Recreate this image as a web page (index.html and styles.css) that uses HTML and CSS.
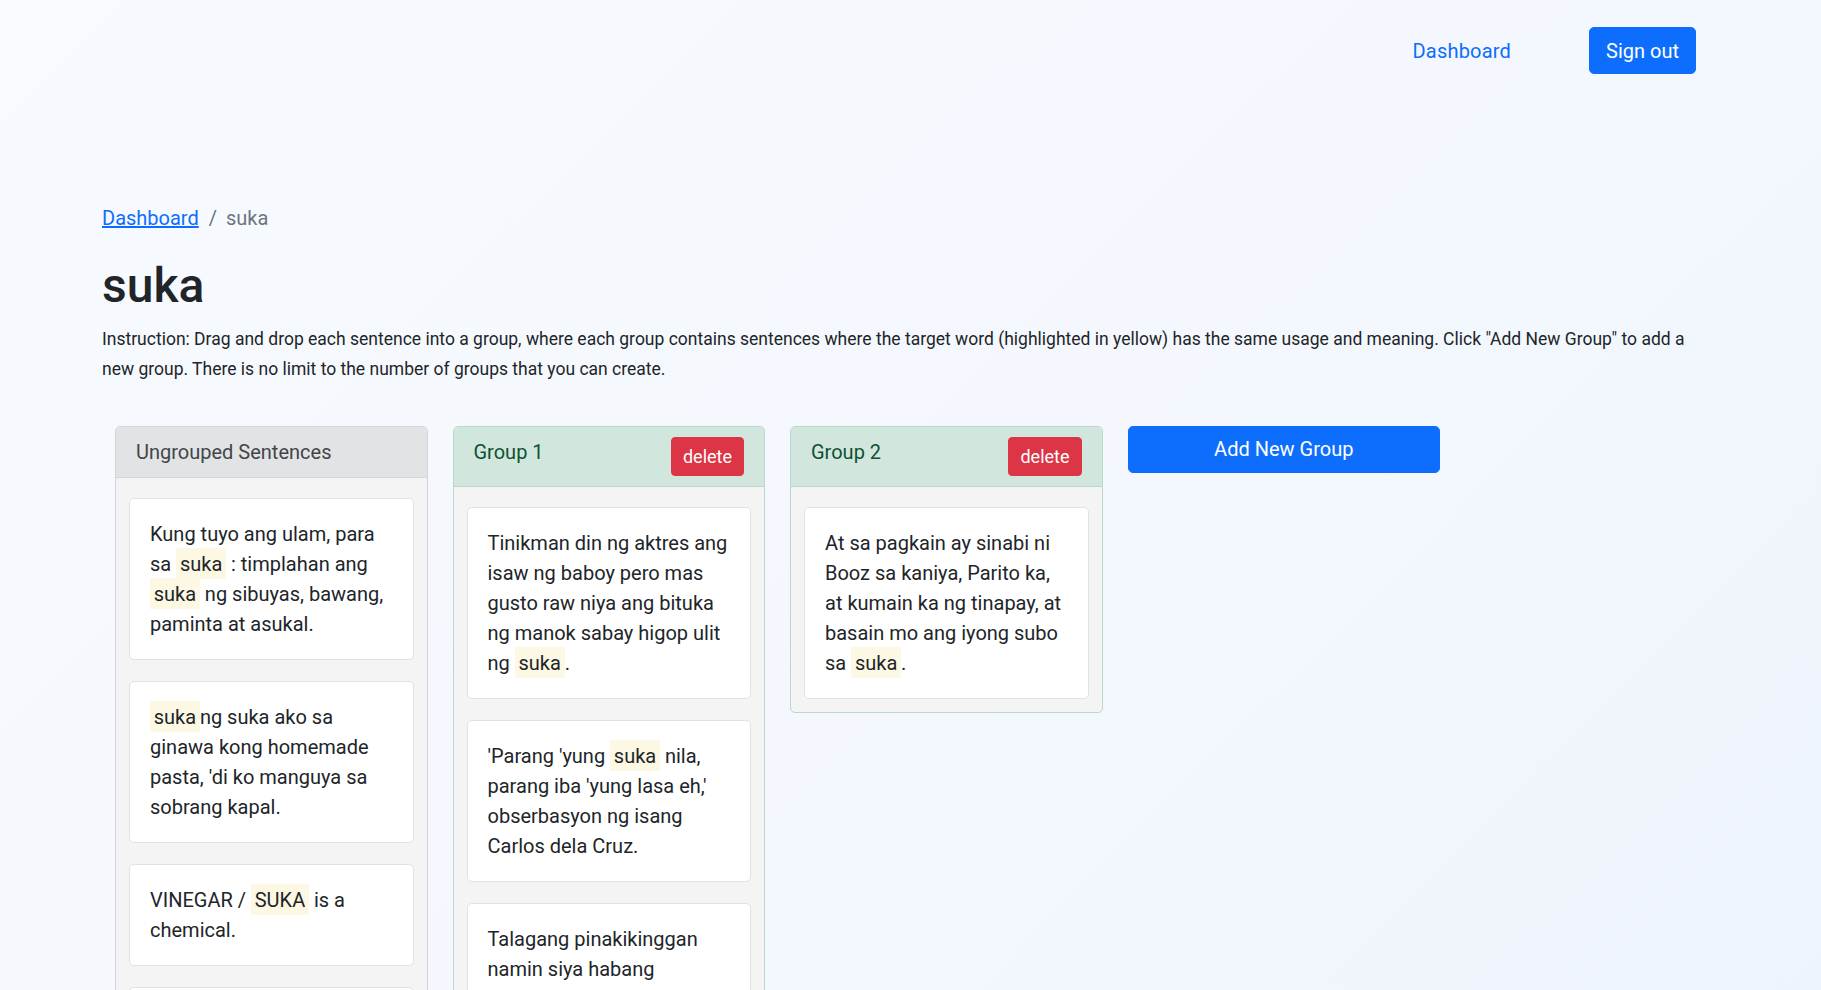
FILE: index.html
```html
<!DOCTYPE html>
<html lang="en">
<head>
<meta charset="utf-8">
<title>suka</title>
<link rel="stylesheet" href="styles.css">
</head>
<body>
<nav class="topnav">
  <a class="nav-link" href="#">Dashboard</a>
  <button class="btn btn-primary btn-lg">Sign out</button>
</nav>
<main class="page">
  <div class="breadcrumb">
    <a class="crumb-link" href="#">Dashboard</a>
    <span class="crumb-sep">/</span>
    <span class="crumb-active">suka</span>
  </div>
  <h1 class="title">suka</h1>
  <p class="instruction">Instruction: Drag and drop each sentence into a group, where each group contains sentences where the target word (highlighted in yellow) has the same usage and meaning. Click "Add New Group" to add a new group. There is no limit to the number of groups that you can create.</p>

  <div class="board">
    <section class="column column-ungrouped">
      <header class="col-head">Ungrouped Sentences</header>
      <div class="col-body">
        <div class="sentence">Kung tuyo ang ulam, para sa <mark>suka</mark> : timplahan ang <mark>suka</mark> ng sibuyas, bawang, paminta at asukal.</div>
        <div class="sentence"><mark>suka</mark>ng suka ako sa ginawa kong homemade pasta, 'di ko manguya sa sobrang kapal.</div>
        <div class="sentence">VINEGAR / <mark>SUKA</mark> is a chemical.</div>
        <div class="sentence">Masarap isawsaw ang lechon sa <mark>suka</mark> na may bawang.</div>
      </div>
    </section>

    <section class="column column-group">
      <header class="col-head">Group 1 <button class="btn btn-danger">delete</button></header>
      <div class="col-body">
        <div class="sentence">Tinikman din ng aktres ang isaw ng baboy pero mas gusto raw niya ang bituka ng manok sabay higop ulit ng <mark>suka</mark>.</div>
        <div class="sentence">'Parang 'yung <mark>suka</mark> nila, parang iba 'yung lasa eh,' obserbasyon ng isang Carlos dela Cruz.</div>
        <div class="sentence">Talagang pinakikinggan namin siya habang kumakain kami ng kikiam na may <mark>suka</mark>.</div>
      </div>
    </section>

    <section class="column column-group">
      <header class="col-head">Group 2 <button class="btn btn-danger">delete</button></header>
      <div class="col-body">
        <div class="sentence">At sa pagkain ay sinabi ni Booz sa kaniya, Parito ka, at kumain ka ng tinapay, at basain mo ang iyong subo sa <mark>suka</mark>.</div>
      </div>
    </section>

    <button class="btn btn-primary btn-lg add-group">Add New Group</button>
  </div>
</main>
</body>
</html>
```
FILE: styles.css
```css
* { box-sizing: border-box; }
html { scrollbar-width: none; }
html::-webkit-scrollbar { display: none; }
body {
  margin: 0;
  min-height: 100vh;
  font-family: Roboto, "Liberation Sans", sans-serif;
  font-size: 16px;
  line-height: 1.5;
  color: #212529;
  background: linear-gradient(135deg, #f7fbff 0%, #f4f8fe 50%, #eef4fc 100%);
}

.topnav {
  display: flex;
  justify-content: flex-end;
  align-items: center;
  gap: 78px;
  padding: 27px 125px 0 0;
}
.nav-link {
  font-size: 20px;
  line-height: 30px;
  color: #0d6efd;
  text-decoration: none;
  letter-spacing: 0.01em;
}

.btn {
  font-family: inherit;
  color: #fff;
  border: 1px solid transparent;
  cursor: pointer;
}
.btn-lg {
  font-size: 20px;
  line-height: 30px;
  padding: 7.5px 16px;
  border-radius: 5px;
}
.btn-primary { background: #0d6efd; border-color: #0d6efd; }
.btn-danger {
  background: #dc3545;
  border-color: #dc3545;
  font-size: 18px;
  line-height: 27px;
  padding: 5px 11px;
  border-radius: 4px;
}

.page { padding: 0 102px; }

.breadcrumb {
  margin-top: 129px;
  font-size: 20px;
  line-height: 30px;
  display: flex;
  color: #6c757d;
}
.crumb-link { color: #0d6efd; text-decoration: underline; }
.crumb-sep { padding: 0 9px 0 10px; }

.title {
  margin: 24px 0 9px;
  font-size: 48px;
  font-weight: 500;
  line-height: 1.2;
}
.instruction {
  margin: 0;
  font-size: 17.5px;
  line-height: 30px;
}

.board {
  display: flex;
  align-items: flex-start;
  gap: 25px;
  margin: 42px 0 0 13px;
}
.column {
  width: 312.5px;
  flex: none;
  border: 1px solid #d3d5d8;
  border-radius: 5px;
  background: #f4f4f4;
  overflow: hidden;
}
.col-head {
  display: flex;
  justify-content: space-between;
  align-items: flex-start;
  padding: 10px 20px;
  font-size: 20px;
  line-height: 30px;
  border-bottom: 1px solid #d3d5d8;
}
.column-ungrouped .col-head { background: #e2e3e5; color: #41464b; }
.column-group { border-color: #bcd8cb; }
.column-group .col-head { background: #d1e7dd; color: #0f5132; border-bottom-color: #bcd8cb; }

.col-body {
  display: flex;
  flex-direction: column;
  gap: 21px;
  padding: 20px 13px 13px;
}
.sentence {
  background: #fff;
  border: 1px solid #e2e2e2;
  border-radius: 5px;
  padding: 20px;
  font-size: 20px;
  line-height: 30px;
}
mark {
  background: #fcf8e3;
  color: inherit;
  padding: 0.1875em;
}

.add-group {
  width: 312.5px;
  flex: none;
}
```
